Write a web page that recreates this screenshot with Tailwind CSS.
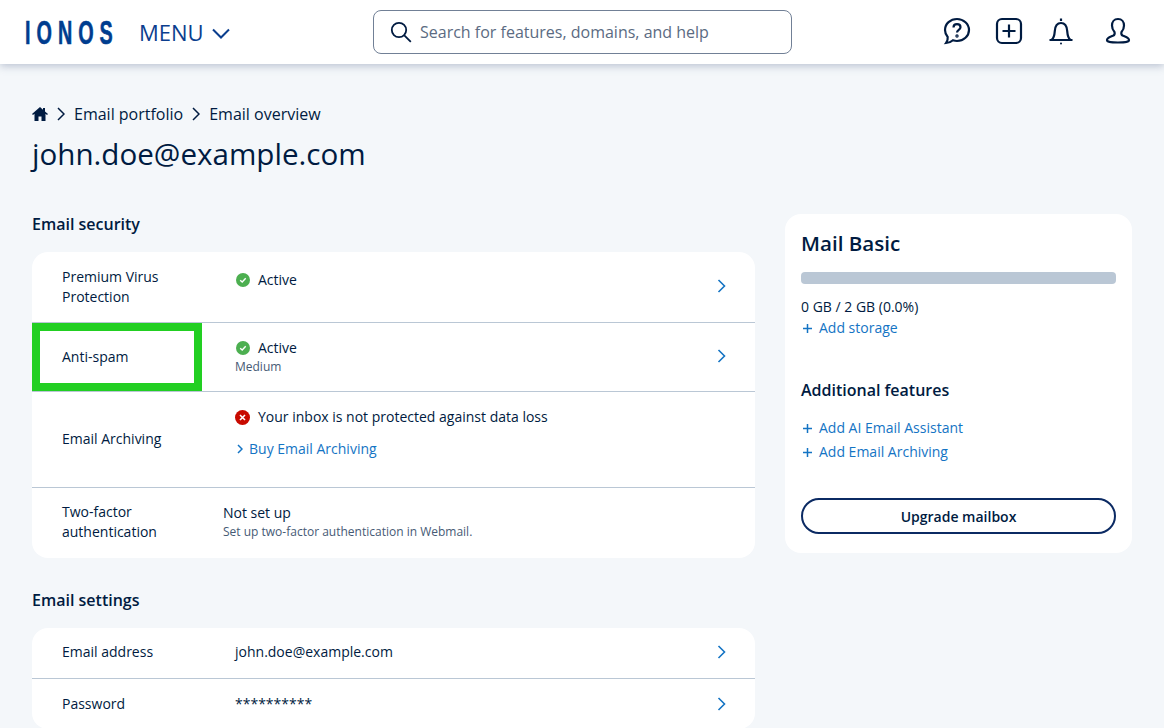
<!DOCTYPE html>
<html lang="en">
<head>
<meta charset="UTF-8">
<title>Email overview</title>
<script src="https://cdn.jsdelivr.net/npm/@tailwindcss/browser@4"></script>
</head>
<body class="h-[728px] overflow-hidden bg-[#f4f7fa] font-['Open_Sans',sans-serif] text-[#001b41]">
  <!-- Header -->
  <header class="relative z-10 flex h-[64px] items-center bg-white pl-[25px] pr-[33px] shadow-[0_2px_8px_rgba(113,126,157,0.45)]">
    <span class="w-[114px] shrink-0 origin-left scale-x-[.6] font-['Liberation_Sans',sans-serif] text-[33px] leading-none font-bold tracking-[10px] text-[#003d8f] [-webkit-text-stroke:0.6px_#003d8f]">IONOS</span>
    <div class="flex w-[234px] shrink-0 items-center text-[#0b3e8e]">
      <span class="text-[22px] leading-none">MENU</span>
      <svg class="ml-[8px] mt-[3px]" width="18" height="11" viewBox="0 0 18 11" fill="none" stroke="currentColor" stroke-width="2"><path d="M1 1.500l8 8 8-8"/></svg>
    </div>
    <div class="flex h-[44px] w-[419px] shrink-0 items-center rounded-[8px] border border-[#718096] pl-[15px]">
      <svg width="24" height="24" viewBox="0 0 24 24" fill="none" stroke="#001b41" stroke-width="1.800"><circle cx="10" cy="10" r="7.200"/><path d="M15.300 15.300l6.500 6.500"/></svg>
      <span class="ml-[7px] text-[16px] text-[#5b6b82]">Search for features, domains, and help</span>
    </div>
    <div class="ml-auto flex items-center gap-[24px] text-[#001b41]">
      <svg class="-mt-[2px]" width="28" height="28" viewBox="0 0 28 28" fill="none" stroke="currentColor" stroke-width="2.200"><path d="M14 2C7.400 2 2 6.800 2 13c0 2.600 1 5 2.700 6.900.3 2-.4 4.200-1.700 6.100 2.800-.2 5.300-1.200 7-2.700 1.300.4 2.600.7 4 .7 6.600 0 12-4.900 12-11S20.600 2 14 2z"/><path d="M10.500 10.500c0-2 1.500-3.300 3.500-3.300s3.500 1.200 3.500 3c0 2.800-3.500 2.500-3.500 5.300"/><circle cx="14" cy="19" r=".6"/></svg>
      <svg class="-mt-[2px]" width="28" height="28" viewBox="0 0 28 28" fill="none" stroke="currentColor" stroke-width="2.200"><rect x="2" y="2" width="24" height="24" rx="5"/><path d="M14 7.500v13M7.500 14h13"/></svg>
      <svg class="-mt-[2px]" width="28" height="28" viewBox="0 0 28 28" fill="none" stroke="currentColor" stroke-width="2.200"><path d="M14 1.500v2.500M2.500 23h23M4.500 23c2.800-2 3-5 3.300-9 .3-4.500 2.400-8 6.200-8s5.900 3.500 6.200 8c.3 4 .5 7 3.300 9"/><circle cx="14" cy="26.500" r="1" fill="currentColor" stroke="none"/></svg>
      <svg class="-mt-[2px] -mr-px ml-[5px]" width="28" height="28" viewBox="0 0 28 28" fill="none" stroke="currentColor" stroke-width="2.200"><path d="M14 2c-3.900 0-6 2.800-6 6.500 0 2.800 1.100 5 2.500 6.500.4 1.600.2 2.800-1 3.500-2.500 1.200-6.500 2-6.500 4.500 0 2 3 2.500 11 2.500s11-.5 11-2.500c0-2.500-4-3.300-6.500-4.500-1.200-.7-1.400-1.900-1-3.500 1.400-1.500 2.500-3.700 2.500-6.500C20 4.800 17.900 2 14 2z"/></svg>
    </div>
  </header>

  <main class="px-[32px] pt-[38px]">
    <!-- Breadcrumb -->
    <nav class="flex h-[24px] items-center text-[16px]">
      <svg width="16" height="14" viewBox="0 0 16 14" fill="#001b41"><path d="M8 0L0 7l1 1 1.500-1.300V14h4V9.500h3V14h4V6.700L15 8l1-1-3-2.600V1h-2v1.700z"/></svg>
      <svg class="mx-[9px]" width="8" height="14" viewBox="0 0 8 14" fill="none" stroke="#001b41" stroke-width="1.500"><path d="M1 1l6 6-6 6"/></svg>
      <span>Email portfolio</span>
      <svg class="mx-[9px]" width="8" height="14" viewBox="0 0 8 14" fill="none" stroke="#001b41" stroke-width="1.500"><path d="M1 1l6 6-6 6"/></svg>
      <span>Email overview</span>
    </nav>
    <h1 class="mt-[7px] text-[29.600px] leading-[42px]">john.doe@example.com</h1>

    <div class="mt-[37px] flex gap-[30px]">
      <!-- Left column -->
      <div class="w-[723px] shrink-0">
        <h2 class="h-[24px] text-[16px] leading-[24px] font-semibold">Email security</h2>
        <section class="mt-[16px] rounded-[16px] bg-white text-[14px] leading-[20px]">
          <div class="flex h-[71px] border-b border-[#bac7d5]">
            <div class="w-[170px] shrink-0 pl-[30px] pt-[15px]">Premium Virus<br>Protection</div>
            <div class="flex items-center gap-[8px] self-start pl-[34px] pt-[18px]">
              <svg width="14" height="14" viewBox="0 0 14 14"><circle cx="7" cy="7" r="7" fill="#4caf50"/><path d="M4.200 7.200l2 1.800 3.500-3.700" fill="none" stroke="#fff" stroke-width="1.400"/></svg>
              <span>Active</span>
            </div>
            <svg class="ml-auto mr-[29px] mt-[27px]" width="9" height="14" viewBox="0 0 9 14" fill="none" stroke="#1474c4" stroke-width="1.600"><path d="M1.500 1l6 6-6 6"/></svg>
          </div>
          <div class="flex h-[69px] border-b border-[#bac7d5]">
            <div class="flex w-[170px] shrink-0 items-center border-8 border-[#22cf22] pl-[22px]">Anti-spam</div>
            <div class="pl-[34px] pt-[15px]">
              <div class="flex items-center gap-[8px]">
                <svg width="14" height="14" viewBox="0 0 14 14"><circle cx="7" cy="7" r="7" fill="#4caf50"/><path d="M4.200 7.200l2 1.800 3.500-3.700" fill="none" stroke="#fff" stroke-width="1.400"/></svg>
                <span>Active</span>
              </div>
              <div class="-ml-px text-[12px] leading-[18px] text-[#465a75]">Medium</div>
            </div>
            <svg class="ml-auto mr-[29px] mt-[26px]" width="9" height="14" viewBox="0 0 9 14" fill="none" stroke="#1474c4" stroke-width="1.600"><path d="M1.500 1l6 6-6 6"/></svg>
          </div>
          <div class="flex h-[96px] border-b border-[#bac7d5]">
            <div class="flex w-[170px] shrink-0 items-center pb-[2px] pl-[30px]">Email Archiving</div>
            <div class="pl-[33px] pt-[15px]">
              <div class="flex items-center gap-[8px]">
                <svg width="15" height="15" viewBox="0 0 15 15"><circle cx="7.500" cy="7.500" r="7.500" fill="#c80a00"/><path d="M5 5l5 5M10 5l-5 5" fill="none" stroke="#fff" stroke-width="1.600"/></svg>
                <span>Your inbox is not protected against data loss</span>
              </div>
              <div class="mt-[12px] flex items-center gap-[6px] pl-[2px] text-[#1474c4]">
                <svg width="6" height="10" viewBox="0 0 6 10" fill="none" stroke="currentColor" stroke-width="1.500"><path d="M1 1l4 4-4 4"/></svg>
                <span>Buy Email Archiving</span>
              </div>
            </div>
          </div>
          <div class="flex h-[70px]">
            <div class="w-[170px] shrink-0 pl-[30px] pt-[14px]">Two-factor<br>authentication</div>
            <div class="pl-[21px] pt-[15px]">
              <div>Not set up</div>
              <div class="text-[12px] leading-[18px] text-[#465a75]">Set up two-factor authentication in Webmail.</div>
            </div>
          </div>
        </section>

        <h2 class="mt-[30px] h-[24px] text-[16px] leading-[24px] font-semibold">Email settings</h2>
        <section class="mt-[16px] rounded-[16px] bg-white text-[14px] leading-[20px]">
          <div class="flex h-[51px] items-center border-b border-[#bac7d5] pb-[2px]">
            <div class="w-[203px] shrink-0 pl-[30px]">Email address</div>
            <span>john.doe@example.com</span>
            <svg class="ml-auto mr-[29px]" width="9" height="14" viewBox="0 0 9 14" fill="none" stroke="#1474c4" stroke-width="1.600"><path d="M1.500 1l6 6-6 6"/></svg>
          </div>
          <div class="flex h-[50px] items-center">
            <div class="w-[203px] shrink-0 pl-[30px]">Password</div>
            <span>**********</span>
            <svg class="ml-auto mr-[29px]" width="9" height="14" viewBox="0 0 9 14" fill="none" stroke="#1474c4" stroke-width="1.600"><path d="M1.500 1l6 6-6 6"/></svg>
          </div>
        </section>
      </div>

      <!-- Right column -->
      <aside class="mt-[2px] h-[339px] w-[347px] shrink-0 rounded-[16px] bg-white px-[16px] pt-[16px]">
        <h2 class="text-[20.600px] leading-[27px] font-semibold">Mail Basic</h2>
        <div class="mt-[15px] h-[12px] rounded-[4px] bg-[#bac7d5]"></div>
        <div class="mt-[13px] text-[14px] leading-[20px]">0 GB / 2 GB (0.0%)</div>
        <div class="mt-[1px] flex items-center gap-[7px] text-[14px] leading-[20px] text-[#1474c4]">
          <svg class="ml-[2px]" width="9" height="9" viewBox="0 0 9 9" stroke="currentColor" stroke-width="1.500"><path d="M4.500 0v9M0 4.500h9"/></svg>
          <span>Add storage</span>
        </div>
        <h3 class="mt-[40px] text-[16px] leading-[24px] font-semibold">Additional features</h3>
        <div class="mt-[16px] flex flex-col gap-[4px] text-[14px] leading-[20px] text-[#1474c4]">
          <div class="flex items-center gap-[7px]">
            <svg class="ml-[2px]" width="9" height="9" viewBox="0 0 9 9" stroke="currentColor" stroke-width="1.500"><path d="M4.500 0v9M0 4.500h9"/></svg>
            <span>Add AI Email Assistant</span>
          </div>
          <div class="flex items-center gap-[7px]">
            <svg class="ml-[2px]" width="9" height="9" viewBox="0 0 9 9" stroke="currentColor" stroke-width="1.500"><path d="M4.500 0v9M0 4.500h9"/></svg>
            <span>Add Email Archiving</span>
          </div>
        </div>
        <button class="mt-[36px] h-[36px] w-full rounded-full border-2 border-[#0b2a63] text-[14px] font-semibold">Upgrade mailbox</button>
      </aside>
    </div>
  </main>
</body>
</html>
